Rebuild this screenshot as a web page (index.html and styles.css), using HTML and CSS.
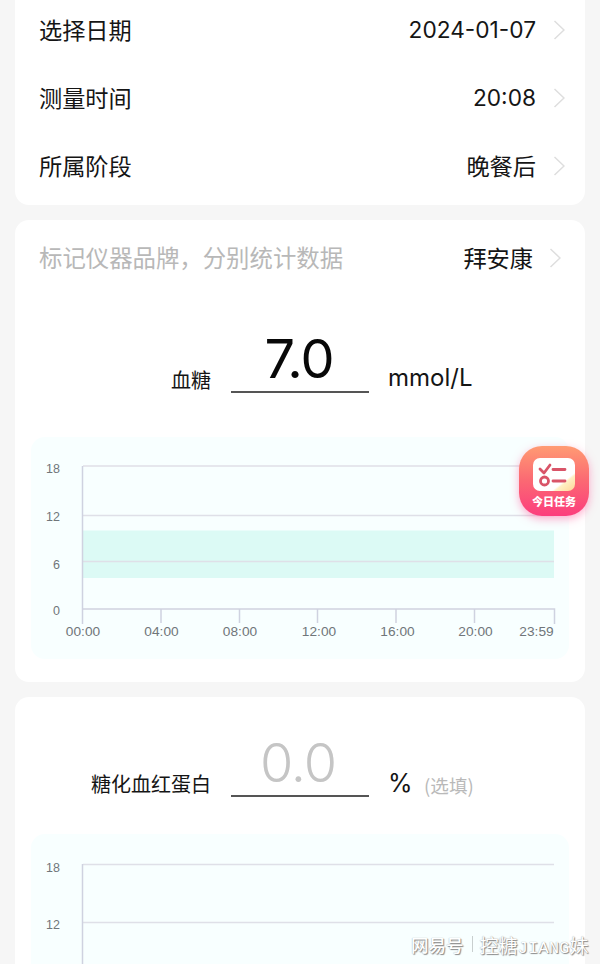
FILE: index.html
```html
<!DOCTYPE html>
<html lang="zh-CN">
<head>
<meta charset="utf-8">
<title>血糖记录</title>
<link rel="stylesheet" href="styles.css">
</head>
<body>
<main class="page">
  <section class="card card-info">
    <div class="row"><span class="cjk">选择日期</span><span class="value num date">2024-01-07</span><svg class="chevron" viewBox="0 0 12 20"><path d="M1.500 1l9.500 9-9.500 9"/></svg></div>
    <div class="row"><span class="cjk">测量时间</span><span class="value num">20:08</span><svg class="chevron" viewBox="0 0 12 20"><path d="M1.500 1l9.500 9-9.500 9"/></svg></div>
    <div class="row"><span class="cjk">所属阶段</span><span class="value cjk">晚餐后</span><svg class="chevron" viewBox="0 0 12 20"><path d="M1.500 1l9.500 9-9.500 9"/></svg></div>
  </section>

  <section class="card card-glucose">
    <div class="row brand"><span class="hint cjk">标记仪器品牌，分别统计数据</span><span class="value cjk">拜安康</span><svg class="chevron" viewBox="0 0 12 20"><path d="M1.500 1l9.500 9-9.500 9"/></svg></div>
    <div class="entry">
      <span class="label">血糖</span>
      <span class="field">7.0</span>
      <span class="unit">mmol/L</span>
    </div>
    <svg class="chart" width="538" height="222" viewBox="31 437 538 222">
      <rect class="band" x="83" y="530.500" width="471" height="47.500"/>
      <path class="grid" d="M83 466H554M83 515.500H554M83 561.500H554"/>
      <path class="axis" d="M82.500 466V624M82.500 609H554.500V624M161 609v14M239.500 609v14M317.500 609v14M396 609v14M474.500 609v14"/>
      <g class="ylab"><text x="60" y="473">18</text><text x="60" y="521">12</text><text x="60" y="568.500">6</text><text x="60" y="614.500">0</text></g>
      <g class="xlab"><text x="83" y="636">00:00</text><text x="161.500" y="636">04:00</text><text x="240" y="636">08:00</text><text x="319" y="636">12:00</text><text x="397.500" y="636">16:00</text><text x="475.500" y="636">20:00</text><text x="536.500" y="636">23:59</text></g>
    </svg>
  </section>

  <section class="card card-hba">
    <div class="entry">
      <span class="label">糖化血红蛋白</span>
      <span class="field empty">0.0</span>
      <span class="unit percent">%</span>
      <span class="optional">(选填)</span>
    </div>
    <svg class="chart" width="538" height="222" viewBox="31 834 538 222">
      <path class="grid" d="M83 864.500H554M83 922.500H554"/>
      <path class="axis" d="M82.500 864V1040"/>
      <g class="ylab"><text x="60" y="871.500">18</text><text x="60" y="928.500">12</text></g>
    </svg>
  </section>

  <div class="task">
    <svg class="task-icon" viewBox="0 0 42 33">
      <defs><linearGradient id="fold" x1="0" y1="0" x2="1" y2="1"><stop offset=".72" stop-color="#fff"/><stop offset=".76" stop-color="#fff0c4"/><stop offset="1" stop-color="#ffd595"/></linearGradient></defs>
      <rect width="42" height="33" rx="7" fill="url(#fold)"/>
      <path d="M7 11l4 4 6-8M20 11.500h12M20 23h12" fill="none" stroke="#d95468" stroke-width="2.800" stroke-linecap="round" stroke-linejoin="round"/>
      <circle cx="11.500" cy="23" r="4" fill="none" stroke="#d95468" stroke-width="2.800"/>
    </svg>
    <span>今日任务</span>
  </div>

  <div class="watermark"><span class="wm-site">网易号</span><i></i><span class="wm-name">控糖<b>JIANG</b>妹</span></div>
</main>
</body>
</html>
```

FILE: styles.css
```css
* { box-sizing: border-box; }
body { margin: 0; background: #f6f6f6; color: #151515; font-family: "Noto Sans CJK SC", sans-serif; }
.page { position: relative; width: 600px; height: 964px; overflow: hidden; padding: 0 15px; display: flex; flex-direction: column; gap: 15px; }
.card { flex: none; background: #fff; border-radius: 14px; }
.card-info { height: 205px; border-radius: 0 0 14px 14px; }
.row { display: flex; align-items: center; height: 68px; padding: 0 20px 0 24px; font-size: 23.200px; line-height: 34px; white-space: nowrap; }
.card-info .row:first-child { height: 64px; padding-bottom: 4px; }
.cjk { padding-bottom: 3px; }
.value { margin-left: auto; }
.num { font-family: Inter, sans-serif; font-size: 22.700px; }
.chevron { width: 12px; height: 20px; margin-left: 17px; fill: none; stroke: #dedede; stroke-width: 1.500; }
.card-info .value.cjk { margin-right: 1px; }
.card-info .value.cjk + .chevron { margin-left: 16px; }
.card-glucose { height: 462px; }
.brand { height: 76px; padding-right: 24px; }
.brand .chevron { margin-left: 16px; }
.hint { color: #b8b8b8; font-size: 23.400px; }
.entry { display: flex; align-items: flex-end; height: 97px; white-space: nowrap; }
.label { width: 196px; padding-bottom: 1px; text-align: right; font-size: 20px; line-height: 24px; }
.field { width: 138px; height: 66px; margin-left: 20px; padding-right: 2px; border-bottom: 2px solid #555; text-align: center; font: 400 54px/63px Inter, sans-serif; letter-spacing: -1px; color: #080808; }
.empty { padding-right: 4px; color: #c5c5c5; font-weight: 300; }
.unit { margin-left: 19px; font: 400 24px/30px Inter, sans-serif; }
.percent { width: 23px; line-height: 28px; font-size: 25px; }
.optional { margin-left: 13px; color: #b9b9b9; font-size: 18.600px; line-height: 24px; }
.chart { display: block; margin: 44px 0 0 16px; background: #f8ffff; border-radius: 14px; }
.card-hba { height: 390px; }
.card-hba .entry { height: 100px; }
.card-hba .chart { margin-top: 37px; }
.band { fill: #dcfaf5; }
.grid { fill: none; stroke: #dfe0e8; stroke-width: 1.500; }
.axis { fill: none; stroke: #cfd2e0; stroke-width: 1.500; }
.chart text { font-family: "Liberation Sans", sans-serif; fill: #70767a; }
.ylab { font-size: 12.500px; text-anchor: end; }
.xlab { font-size: 13.700px; text-anchor: middle; }
.task { position: absolute; left: 519px; top: 446px; width: 70px; height: 70px; padding-top: 12px; display: flex; flex-direction: column; align-items: center; border-radius: 23px; background: linear-gradient(#ff9b73, #fb6873 50%, #fc3d7d); box-shadow: 0 3px 8px #ff5b9c80; }
.task-icon { width: 42px; height: 33px; }
.task span { margin-top: 2px; color: #fff; font-size: 11px; font-weight: 900; line-height: 16px; }
.watermark { position: absolute; left: 411px; top: 931px; height: 26px; display: flex; align-items: center; color: #fff; text-shadow: 1px 1px 1px #888, 0 0 1px #999; white-space: nowrap; }
.wm-site { font-size: 17.500px; font-weight: 500; }
.watermark i { width: 1px; height: 16px; margin: 0 7px 0 8px; background: #c9cfcf; }
.wm-name { font-size: 19px; }
.wm-name b { font: 400 17.300px "Liberation Mono", monospace; }
```
